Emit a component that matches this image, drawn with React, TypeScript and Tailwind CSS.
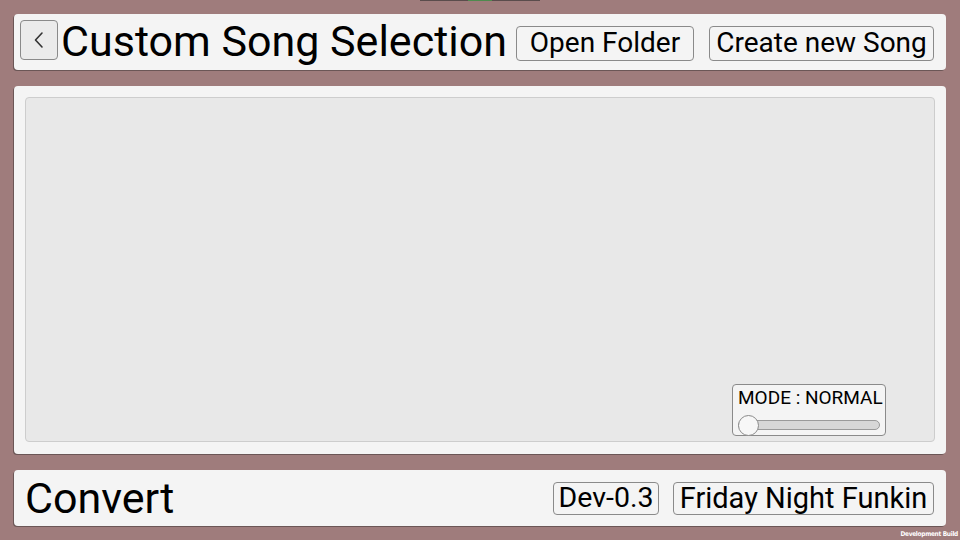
import React from "react";

const font = { fontFamily: "Roboto, 'Noto Sans', sans-serif" };

function Btn({ children, className }: { children: React.ReactNode; className: string }) {
  return (
    <div
      className={`flex items-center justify-center border border-[#8a8a8a] rounded-[4px] bg-[#f4f4f4] text-black leading-none whitespace-nowrap ${className}`}
    >
      {children}
    </div>
  );
}

export default function App() {
  return (
    <div
      className="relative w-[960px] h-[540px] bg-[#9f7c7c] flex flex-col gap-[16px] px-[14px] pt-[14px] pb-[14px] overflow-hidden"
      style={font}
    >
      {/* top indicator */}
      <div className="absolute top-0 left-[420px] w-[120px] h-[1px] bg-[#5a4c4c] flex">
        <div className="ml-[48px] w-[24px] h-full bg-[#4e8a4e]" />
      </div>

      {/* header */}
      <div className="h-[56px] shrink-0 bg-[#f4f4f4] rounded-[4px] shadow-[-1px_1px_0_#6b5656] flex items-center pl-[6px] pr-[12px]">
        <div className="w-[38px] h-[40px] -mt-[4px] rounded-[4px] border border-[#8a8a8a] bg-[#ebebeb] flex items-center justify-center">
          <svg width="14" height="20" viewBox="0 0 14 20" fill="none">
            <path d="M10 3 L3.5 10 L10 17" stroke="#333" strokeWidth="1.6" strokeLinecap="round" strokeLinejoin="round" />
          </svg>
        </div>
        <div className="ml-[3px] text-[43px] leading-none text-black -mt-[2px] whitespace-nowrap">Custom Song Selection</div>
        <Btn className="ml-auto w-[178px] h-[35px] text-[28px] mt-[2px]">Open Folder</Btn>
        <Btn className="ml-[15px] w-[225px] h-[35px] text-[28px] mt-[2px]">Create new Song</Btn>
      </div>

      {/* main */}
      <div className="h-[368px] shrink-0 bg-[#f4f4f4] rounded-[4px] shadow-[-1px_1px_0_#6b5656] p-[11px] pb-[12px] flex">
        <div className="flex-1 bg-[#e8e8e8] border border-[#cdcdcd] rounded-[4px] flex items-end justify-end pr-[48px] pb-[5px]">
          <div className="w-[154px] h-[52px] bg-[#f4f4f4] border border-[#8a8a8a] rounded-[4px] flex flex-col px-[5px] pt-[3px]">
            <div className="text-[19px] leading-[20px] text-black whitespace-nowrap">MODE : NORMAL</div>
            <div className="relative mt-[7px] h-[20px] flex items-center">
              <div className="w-full h-[10px] rounded-full bg-[#d7d7d7] border border-[#9a9a9a]" />
              <div className="absolute left-0 top-0 w-[21px] h-[21px] rounded-full bg-[#f7f7f7] border border-[#8a8a8a]" />
            </div>
          </div>
        </div>
      </div>

      {/* bottom */}
      <div className="h-[56px] shrink-0 bg-[#f4f4f4] rounded-[4px] shadow-[-1px_1px_0_#6b5656] flex items-center pl-[11px] pr-[12px]">
        <div className="text-[43px] leading-none text-black whitespace-nowrap">Convert</div>
        <Btn className="ml-auto w-[106px] h-[33px] text-[28.5px]">Dev-0.3</Btn>
        <Btn className="ml-[14px] w-[261px] h-[33px] text-[29px]">Friday Night Funkin</Btn>
      </div>

      <div
        className="absolute right-[2px] bottom-[3px] text-[6.5px] tracking-[-0.3px] leading-none font-bold text-white whitespace-nowrap"
        style={{ fontFamily: "'DejaVu Sans Condensed', 'Liberation Sans', sans-serif", fontStretch: "condensed" }}
      >
        Development Build
      </div>
    </div>
  );
}
